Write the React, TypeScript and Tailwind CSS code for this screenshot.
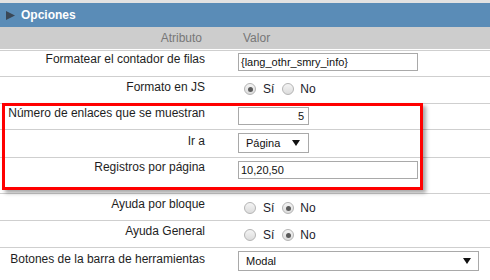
import React from "react";

const font = { fontFamily: '"Liberation Sans", Arial, sans-serif' };

function Radio({ checked }: { checked?: boolean }) {
  return (
    <span className="flex h-[12px] w-[12px] items-center justify-center rounded-full border border-[#b4b4b4] bg-gradient-to-b from-[#f4f4f4] to-[#dcdcdc]">
      {checked && <span className="h-[5px] w-[5px] rounded-full bg-[#5a5a5a]" />}
    </span>
  );
}

function RadioGroup({ yes }: { yes: boolean }) {
  return (
    <div className="flex items-center pl-[6px] text-[12px] leading-[12px] text-[#1b1b2b]">
      <Radio checked={yes} />
      <span className="ml-[7px]">Sí</span>
      <span className="ml-[8px]"><Radio checked={!yes} /></span>
      <span className="ml-[6px]">No</span>
    </div>
  );
}

function Caret() {
  return (
    <svg width="8" height="6" viewBox="0 0 8 6">
      <polygon points="0,0 8,0 4,6" fill="#111" />
    </svg>
  );
}

function Row({
  label,
  labelPt,
  valuePt,
  h,
  children,
  last,
}: {
  label: string;
  labelPt: string;
  valuePt: string;
  h: string;
  children: React.ReactNode;
  last?: boolean;
}) {
  return (
    <div className={`flex ${h} ${last ? "" : "border-b border-[#cfcfcf]"}`}>
      <div className={`flex w-[238px] shrink-0 justify-end pr-[33px] ${labelPt}`}>
        <span className="whitespace-nowrap text-[12px] leading-[15px] text-[#1e1e1e]">{label}</span>
      </div>
      <div className={`flex-1 ${valuePt}`}>{children}</div>
    </div>
  );
}

export default function App() {
  return (
    <div className="relative h-[280px] w-[490px] overflow-hidden bg-white" style={font}>
      <div className="h-[3px] bg-[#e2e2e2]" />
      <div className="flex h-[24px] items-center bg-[#5a8cb7] pl-[6px]">
        <svg width="9" height="9" viewBox="0 0 9 9">
          <polygon points="0,0 9,4.5 0,9" fill="#3a4756" />
        </svg>
        <span className="ml-[6px] text-[12px] font-bold leading-[15px] text-white">Opciones</span>
      </div>
      <div className="flex h-[22px] items-center bg-[#cdcdcd] text-[12px] leading-[15px] text-[#777]">
        <div className="w-[238px] pr-[36px] text-right">Atributo</div>
        <div className="pl-[5px]">Valor</div>
      </div>
      <div className="h-[1px] bg-white" />
      <div className="border-t border-[#cfcfcf]">
        <Row label="Formatear el contador de filas" labelPt="pt-[1px]" valuePt="pt-[2px]" h="h-[26px]">
          <div className="h-[18px] w-[180px] border border-[#a9a9a9] pl-[2px] text-[11px] leading-[16px] text-[#111]">
            {"{lang_othr_smry_info}"}
          </div>
        </Row>
        <Row label="Formato en JS" labelPt="pt-[3px]" valuePt="pt-[6px]" h="h-[27px]">
          <RadioGroup yes />
        </Row>
        <Row label="Número de enlaces que se muestran" labelPt="pt-[2px]" valuePt="pt-[3px]" h="h-[26px]">
          <div className="h-[18px] w-[71px] border border-[#a9a9a9] pr-[4px] text-right text-[11px] leading-[16px] text-[#111]">
            5
          </div>
        </Row>
        <Row label="Ir a" labelPt="pt-[4px]" valuePt="pt-[3px]" h="h-[28px]">
          <div className="flex h-[20px] w-[71px] items-center justify-between border border-[#a9a9a9] pl-[7px] pr-[8px] text-[11px] leading-[14px] text-[#111]">
            <span>Página</span>
            <Caret />
          </div>
        </Row>
        <Row label="Registros por página" labelPt="pt-[2px]" valuePt="pt-[3px]" h="h-[36px]">
          <div className="h-[18px] w-[180px] border border-[#a9a9a9] pl-[2px] text-[11px] leading-[16px] text-[#111]">
            10,20,50
          </div>
        </Row>
        <Row label="Ayuda por bloque" labelPt="pt-[3px]" valuePt="pt-[8px]" h="h-[27px]">
          <RadioGroup yes={false} />
        </Row>
        <Row label="Ayuda General" labelPt="pt-[3px]" valuePt="pt-[8px]" h="h-[27px]">
          <RadioGroup yes={false} />
        </Row>
        <Row label="Botones de la barra de herramientas" labelPt="pt-[4px]" valuePt="pt-[3px]" h="h-[32px]" last>
          <div className="flex h-[20px] w-[241px] items-center justify-between border border-[#a9a9a9] pl-[7px] pr-[7px] text-[11px] leading-[14px] text-[#111]">
            <span>Modal</span>
            <Caret />
          </div>
        </Row>
      </div>
      <div className="pointer-events-none absolute left-[2px] top-[103px] h-[87px] w-[421px] border-[3px] border-[#f00] shadow-[3px_3px_4px_rgba(0,0,0,0.35)]" />
    </div>
  );
}
